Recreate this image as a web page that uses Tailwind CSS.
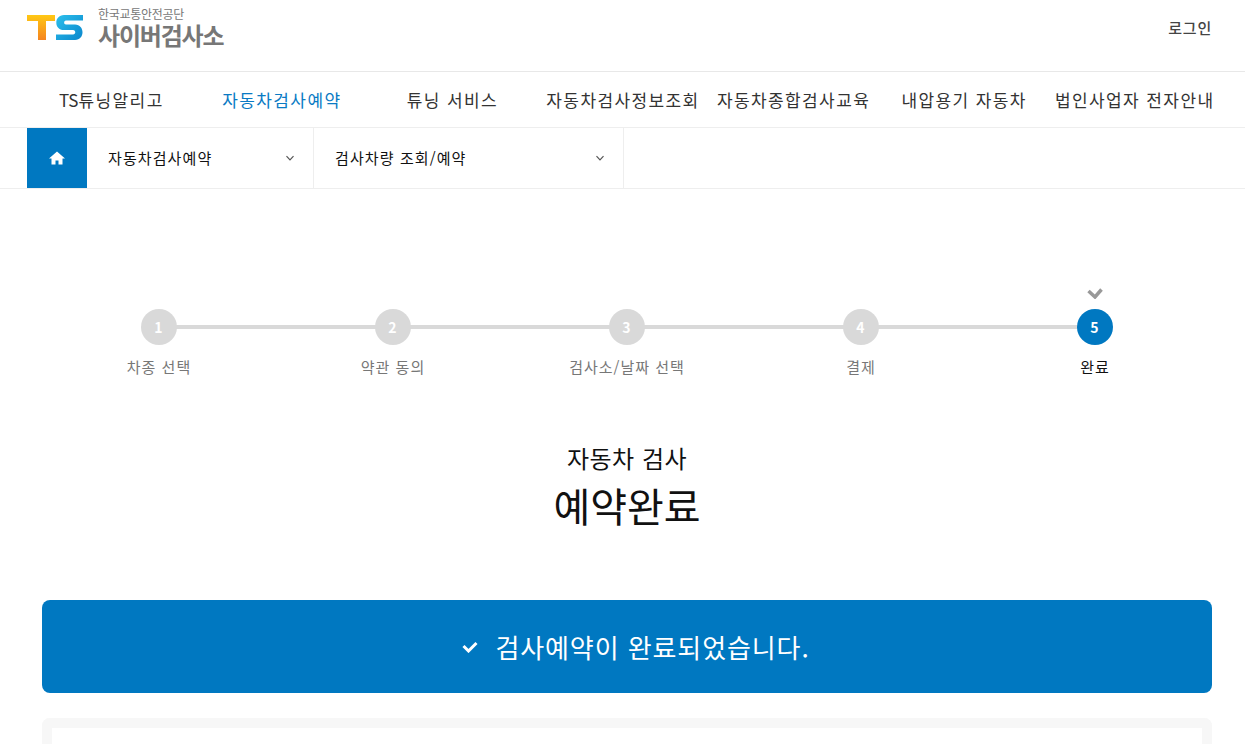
<!DOCTYPE html>
<html lang="ko"><head><meta charset="utf-8">
<script src="https://cdn.jsdelivr.net/npm/@tailwindcss/browser@4"></script>
</head>
<body class="h-[744px] overflow-hidden bg-white font-['Noto_Sans_CJK_KR','Noto_Sans',sans-serif] text-[#222]">
<header class="flex h-[72px] items-start justify-between border-b border-[#e8e8e8] pl-[27px] pr-[33px]">
  <div class="flex items-start gap-[15px] pt-[7px]">
    <svg class="mt-[8px] h-[25px] w-[56px]" viewBox="0 0 56 25">
      <defs>
        <linearGradient id="lt" x1="0" y1="0" x2="0" y2="1"><stop offset="0" stop-color="#ffc814"/><stop offset="1" stop-color="#f5841f"/></linearGradient>
        <linearGradient id="ls" x1="0" y1="0" x2="1" y2="1"><stop offset="0" stop-color="#2cc0ec"/><stop offset="1" stop-color="#0a86cc"/></linearGradient>
      </defs>
      <path fill="url(#lt)" d="M0 0H28V6H19V25H11V6H0Z"/>
      <path fill="url(#ls)" d="M56 0V5.500H39C36.500 5.500 36.500 9.500 39 9.500H48C58 9.500 58 25 48 25H29V19.500H46C49 19.500 49 15 46 15H37C26.500 15 27 0 37 0Z"/>
    </svg>
    <div class="flex flex-col text-[#777]">
      <span class="text-[12px] leading-[14px] tracking-[-0.3px]">한국교통안전공단</span>
      <span class="text-[24px] font-bold leading-[28px] tracking-[-1.2px]">사이버검사소</span>
    </div>
  </div>
  <a class="mt-[18px] text-[15px] font-medium leading-5 tracking-[0.8px] text-[#444]">로그인</a>
</header>
<nav class="grid h-[56px] grid-cols-7 items-center border-b border-[#eee] pl-[26px] pr-[25px] text-[17px] tracking-[1.4px] text-[#333]">
  <a class="text-center"><span class="tracking-normal">TS</span>튜닝알리고</a>
  <a class="text-center text-[#0a7ac4]">자동차검사예약</a>
  <a class="text-center">튜닝 서비스</a>
  <a class="text-center">자동차검사정보조회</a>
  <a class="text-center">자동차종합검사교육</a>
  <a class="text-center">내압용기 자동차</a>
  <a class="text-center">법인사업자 전자안내</a>
</nav>
<div class="flex h-[61px] items-stretch border-b border-[#eee] pl-[27px] text-[15px] tracking-[1.1px] text-[#111]">
  <div class="flex w-[60px] items-center justify-center bg-[#0078c1]">
    <svg class="h-[16px] w-[16px] fill-white" viewBox="0 0 16 16"><path d="M8 1.500 0 8.500H2.500V14.500H6.500V10.500H9.500V14.500H13.500V8.500H16Z"/></svg>
  </div>
  <div class="flex w-[227px] items-center justify-between border-r border-[#eee] pl-[21px] pr-[19px]">
    <span>자동차검사예약</span>
    <svg class="h-[8px] w-[8px] fill-none stroke-[#555] stroke-[1.2]" viewBox="0 0 8 8"><path d="M0.500 2.200 4 5.800 7.500 2.200"/></svg>
  </div>
  <div class="flex w-[310px] items-center justify-between border-r border-[#eee] pl-[21px] pr-[19px]">
    <span>검사차량 조회/예약</span>
    <svg class="h-[8px] w-[8px] fill-none stroke-[#555] stroke-[1.2]" viewBox="0 0 8 8"><path d="M0.500 2.200 4 5.800 7.500 2.200"/></svg>
  </div>
</div>
<main class="pl-[42px] pr-[33px]">
  <ol class="relative mt-[100px] grid h-[92px] grid-cols-5 text-center text-[15px] tracking-[1px] text-[#777]">
    <div class="absolute left-[117px] right-[117px] top-[36px] h-[4px] bg-[#d9d9d9]"></div>
    <li class="relative flex flex-col items-center pt-[20px]"><span class="flex h-[36px] w-[36px] items-center justify-center rounded-full bg-[#d9d9d9] text-sm font-bold text-white">1</span><span class="mt-[10px] leading-[24px]">차종 선택</span></li>
    <li class="relative flex flex-col items-center pt-[20px]"><span class="flex h-[36px] w-[36px] items-center justify-center rounded-full bg-[#d9d9d9] text-sm font-bold text-white">2</span><span class="mt-[10px] leading-[24px]">약관 동의</span></li>
    <li class="relative flex flex-col items-center pt-[20px]"><span class="flex h-[36px] w-[36px] items-center justify-center rounded-full bg-[#d9d9d9] text-sm font-bold text-white">3</span><span class="mt-[10px] leading-[24px]">검사소/날짜 선택</span></li>
    <li class="relative flex flex-col items-center pt-[20px]"><span class="flex h-[36px] w-[36px] items-center justify-center rounded-full bg-[#d9d9d9] text-sm font-bold text-white">4</span><span class="mt-[10px] leading-[24px]">결제</span></li>
    <li class="relative flex flex-col items-center pt-[20px] text-[#111]">
      <svg class="absolute -top-[2px] h-[12px] w-[16px] fill-none stroke-[#999] stroke-[3.5]" viewBox="0 0 16 12"><path d="M1.500 4 8 10 14.500 2.500"/></svg>
      <span class="flex h-[36px] w-[36px] items-center justify-center rounded-full bg-[#0078c1] text-sm font-bold text-white">5</span><span class="mt-[10px] leading-[24px]">완료</span></li>
  </ol>
  <div class="mt-[59px] text-center text-[#111]">
    <p class="text-[24px] leading-[36px] tracking-[0.5px]">자동차 검사</p>
    <h1 class="mt-[1px] text-[40px] leading-[56px]">예약완료</h1>
  </div>
  <div class="mt-[67px] flex h-[93px] items-center justify-center gap-[17px] rounded-lg bg-[#0078c1] pl-[18px] text-[26px] tracking-[0.9px] text-white">
    <svg class="h-[12px] w-[16px] fill-none stroke-white stroke-[3]" viewBox="0 0 16 12"><path d="M1.500 5 6.500 10 14.500 2"/></svg>
    <span>검사예약이 완료되었습니다.</span>
  </div>
  <div class="mt-[25px] h-[26px] rounded-t-lg border-x-[10px] border-t-[10px] border-[#f7f7f7] bg-white"></div>
</main>
</body></html>
